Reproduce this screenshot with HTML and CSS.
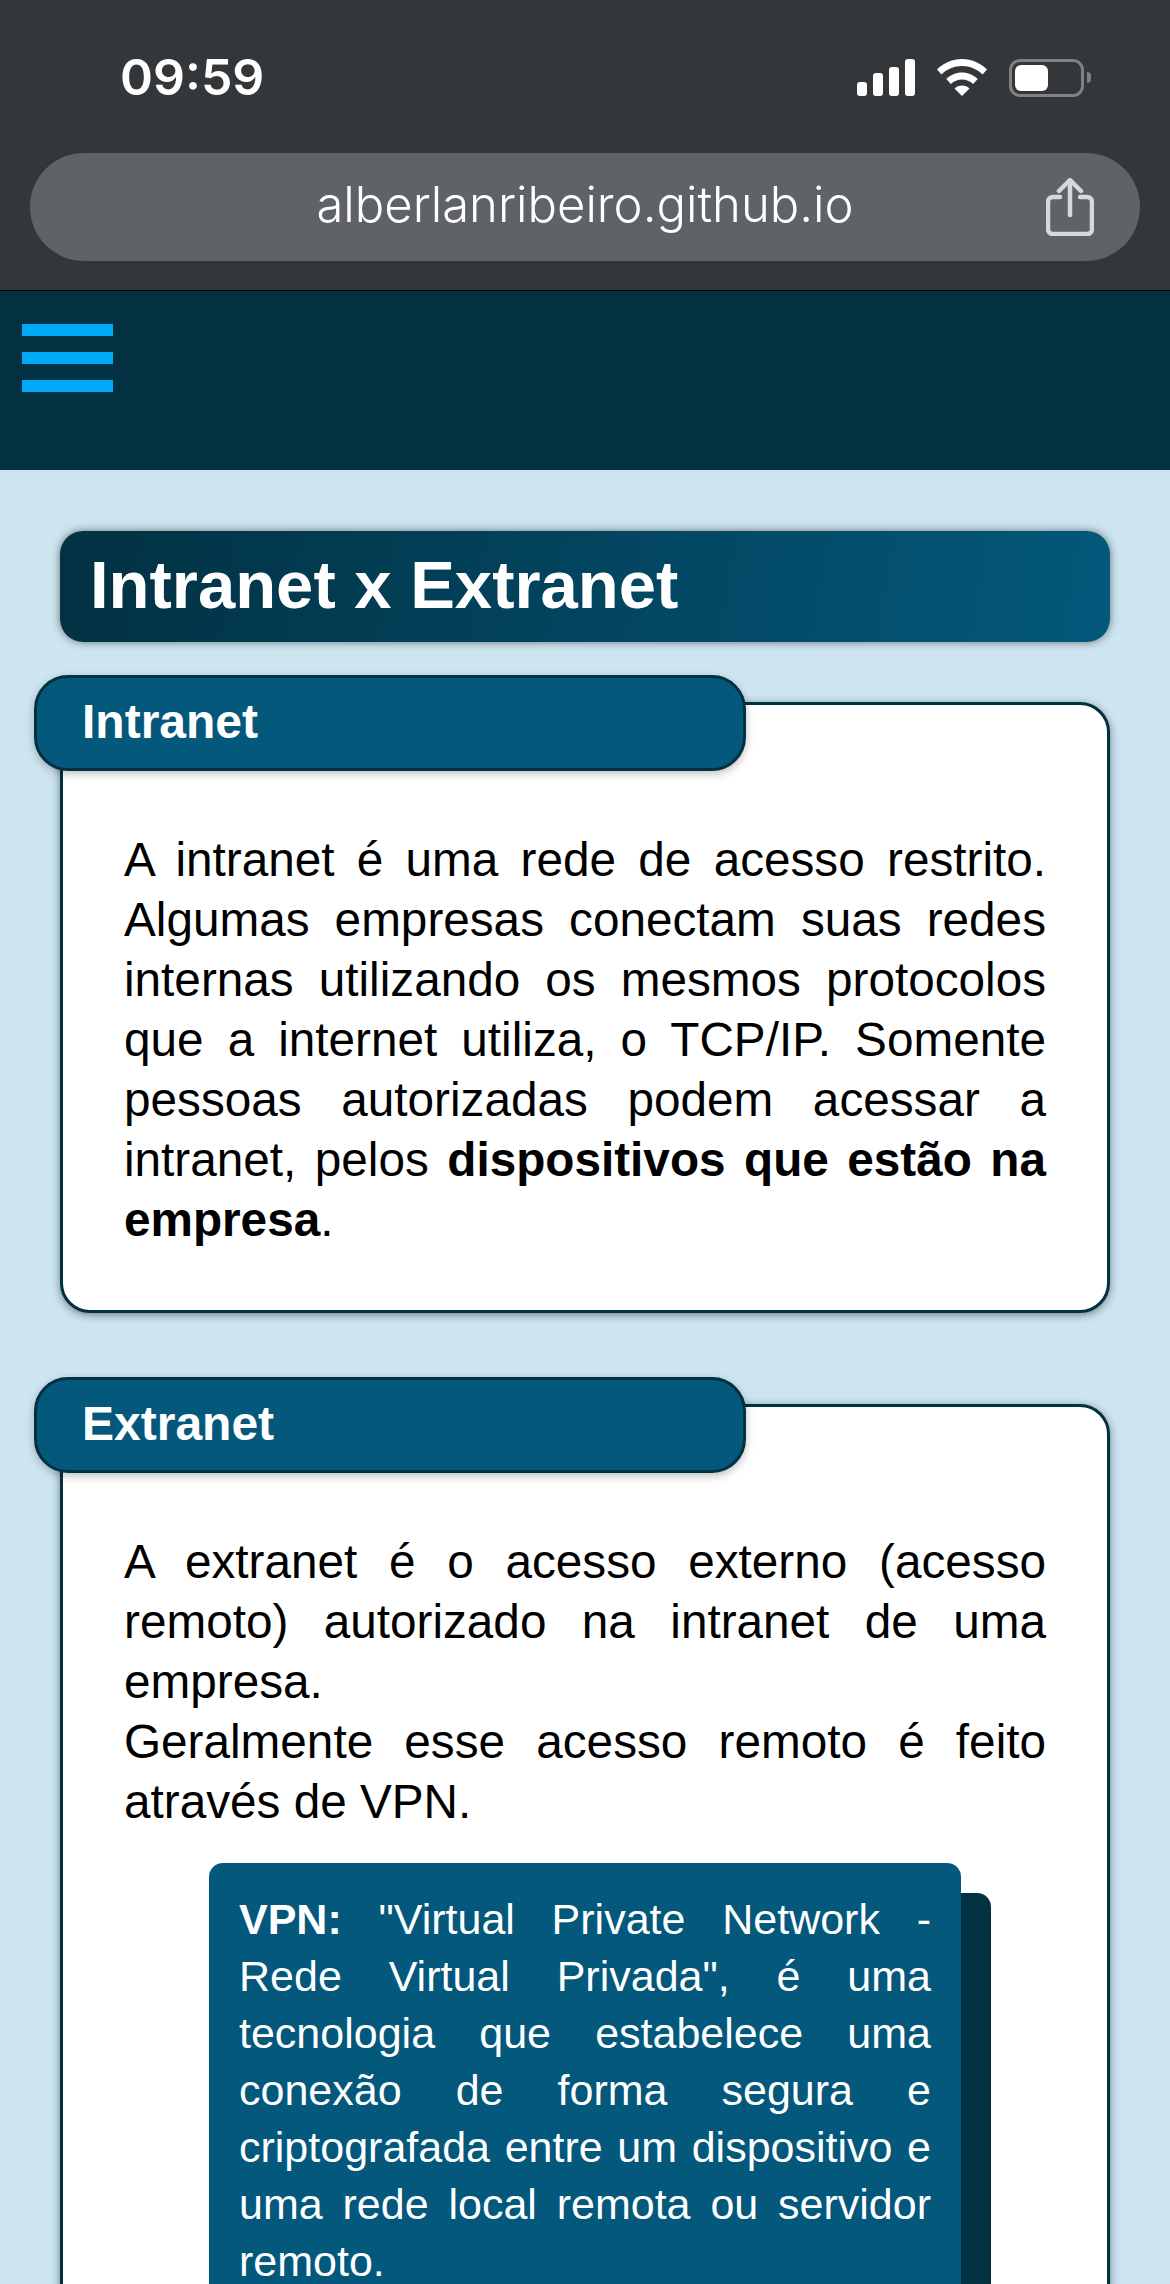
FILE: index.html
```html
<!DOCTYPE html>
<html lang="pt-BR">
<head>
    <meta charset="UTF-8">
    <meta name="viewport" content="width=device-width, initial-scale=1.0">
    <title>Intranet x Extranet</title>
    <link rel="stylesheet" href="styles.css">
</head>
<body>
<div class="screen">

    <div class="browser">
        <div class="status">
            <span class="time">09:59</span>
            <div class="status-icons">
                <svg class="signal" width="58" height="37" viewBox="0 0 58 37" fill="#fff">
                    <rect x="0" y="23" width="10" height="14" rx="3"/>
                    <rect x="16" y="14" width="10" height="23" rx="3"/>
                    <rect x="32" y="8" width="10" height="29" rx="3"/>
                    <rect x="48" y="0" width="10" height="37" rx="3"/>
                </svg>
                <svg class="wifi" width="50" height="37" viewBox="0 0 50 37" fill="#fff">
                    <path d="M25 0C15.500 0 7 3.700 0 10.500L4.500 15.500C10 10 17 7 25 7s15 3 20.500 8.500L50 10.500C43 3.700 34.500 0 25 0z"/>
                    <path d="M25 13.500c-6 0-11.500 2.400-15.700 6.500l4.600 5c3-3 6.900-4.600 11.100-4.600s8.100 1.600 11.100 4.600l4.600-5C36.500 15.900 31 13.500 25 13.500z"/>
                    <path d="M25 26.500c-3 0-5.500 1-7.500 3L25 37l7.500-7.500c-2-2-4.500-3-7.500-3z"/>
                </svg>
                <div class="battery">
                    <div class="battery-body"><div class="battery-fill"></div></div>
                    <div class="battery-nub"></div>
                </div>
            </div>
        </div>
        <div class="urlbar">
            <span class="url">alberlanribeiro.github.io</span>
            <svg class="share" width="48" height="58" viewBox="0 0 48 58" fill="none" stroke="#d5d9de" stroke-width="4.500" stroke-linecap="round" stroke-linejoin="round">
                <path d="M14 19H7a5 5 0 0 0-5 5v27a5 5 0 0 0 5 5h34a5 5 0 0 0 5-5V24a5 5 0 0 0-5-5h-7"/>
                <path d="M24 37V3"/>
                <path d="M13 13L24 2l11 11"/>
            </svg>
        </div>
    </div>

    <header class="topbar">
        <div class="burger"><span></span><span></span><span></span></div>
    </header>

    <main class="content">
        <h1 class="page-title">Intranet x Extranet</h1>

        <section class="block">
            <h2 class="block-tab">Intranet</h2>
            <div class="block-card">
                <p>A intranet é uma rede de acesso restrito. Algumas empresas conectam suas redes internas utilizando os mesmos protocolos que a internet utiliza, o TCP/IP. Somente pessoas autorizadas podem acessar a intranet, pelos <b>dispositivos que estão na empresa</b>.</p>
            </div>
        </section>

        <section class="block">
            <h2 class="block-tab">Extranet</h2>
            <div class="block-card">
                <p>A extranet é o acesso externo (acesso remoto) autorizado na intranet de uma empresa.<br>Geralmente esse acesso remoto é feito através de VPN.</p>
                <div class="note">
                    <p><b>VPN:</b> "Virtual Private Network - Rede Virtual Privada", é uma tecnologia que estabelece uma conexão de forma segura e criptografada entre um dispositivo e uma rede local remota ou servidor remoto.</p>
                </div>
            </div>
        </section>
    </main>

</div>
</body>
</html>
```

FILE: styles.css
```css
html, body { margin: 0; padding: 0; }
body { font-family: "Liberation Sans", Arial, sans-serif; background-color: #cde5f1; }
.screen { height: 2284px; overflow: hidden; background-color: #cde5f1; }

/* browser chrome */
.browser { height: 291px; background-color: #34373a; box-sizing: border-box; padding: 58px 30px 0; border-bottom: 1px solid #000; }
.status { display: flex; justify-content: space-between; align-items: center; height: 39px; padding: 0 49px 0 90px; }
.time { font-family: Inter, sans-serif; font-size: 50px; font-weight: 600; color: #fff; line-height: 39px; }
.status-icons { display: flex; align-items: center; gap: 22px; }
.signal, .wifi { display: block; }
.battery { display: flex; align-items: center; gap: 3px; }
.battery-body { width: 75px; height: 38px; box-sizing: border-box; border: 3px solid #7f8183; border-radius: 11px; padding: 3px; }
.battery-fill { width: 33px; height: 100%; background-color: #fff; border-radius: 6px; }
.battery-nub { width: 4px; height: 11px; background-color: #7f8183; border-radius: 0 4px 4px 0; }

.urlbar { display: grid; grid-template-columns: 1fr auto 1fr; align-items: center; height: 108px; margin-top: 56px; padding: 0 46px; background-color: #5f6367; border-radius: 54px; }
.url { grid-column: 2; padding-bottom: 6px; font-family: Inter, sans-serif; font-size: 49px; font-weight: 350; color: #fff; }
.share { grid-column: 3; justify-self: end; display: block; }

/* site header */
.topbar { height: 179px; background-color: #023142; padding: 33px 0 0 22px; box-sizing: border-box; }
.burger { display: flex; flex-direction: column; gap: 16px; width: 91px; }
.burger span { display: block; height: 12px; background-color: #00a8f7; }

/* content */
.content { padding: 61px 60px 0; }
.page-title { margin: 0; height: 111px; padding: 0 30px; box-sizing: border-box; line-height: 108px; font-size: 67px; font-weight: bold; color: #fff; border-radius: 23px; background: linear-gradient(100deg, #023142, #03587b); box-shadow: 0 0 8px rgba(0, 0, 0, 0.5); }

.block { margin-top: 33px; }
.block + .block { margin-top: 64px; }
.block-tab { position: relative; margin: 0 0 -69px -26px; width: 712px; height: 96px; box-sizing: border-box; padding-left: 45px; line-height: 88px; font-size: 48px; font-weight: bold; color: #fff; background-color: #03587b; border: 3px solid #023142; border-radius: 34px; box-shadow: 0 3px 8px rgba(0, 0, 0, 0.25); }
.block-card { padding: 125px 61px 60px; background-color: #fff; border: 3px solid #023142; border-radius: 30px; box-shadow: 0 2px 9px rgba(0, 0, 0, 0.45); }
.block-card p { margin: 0; font-size: 47.7px; line-height: 60px; text-align: justify; color: #000; }

.note { margin: 31px 85px 0; padding: 28px 30px 60px; background-color: #03587b; border-radius: 14px; box-shadow: 30px 30px 0 #023142; }
.block-card .note p { font-size: 43px; line-height: 57px; color: #fff; }
```
